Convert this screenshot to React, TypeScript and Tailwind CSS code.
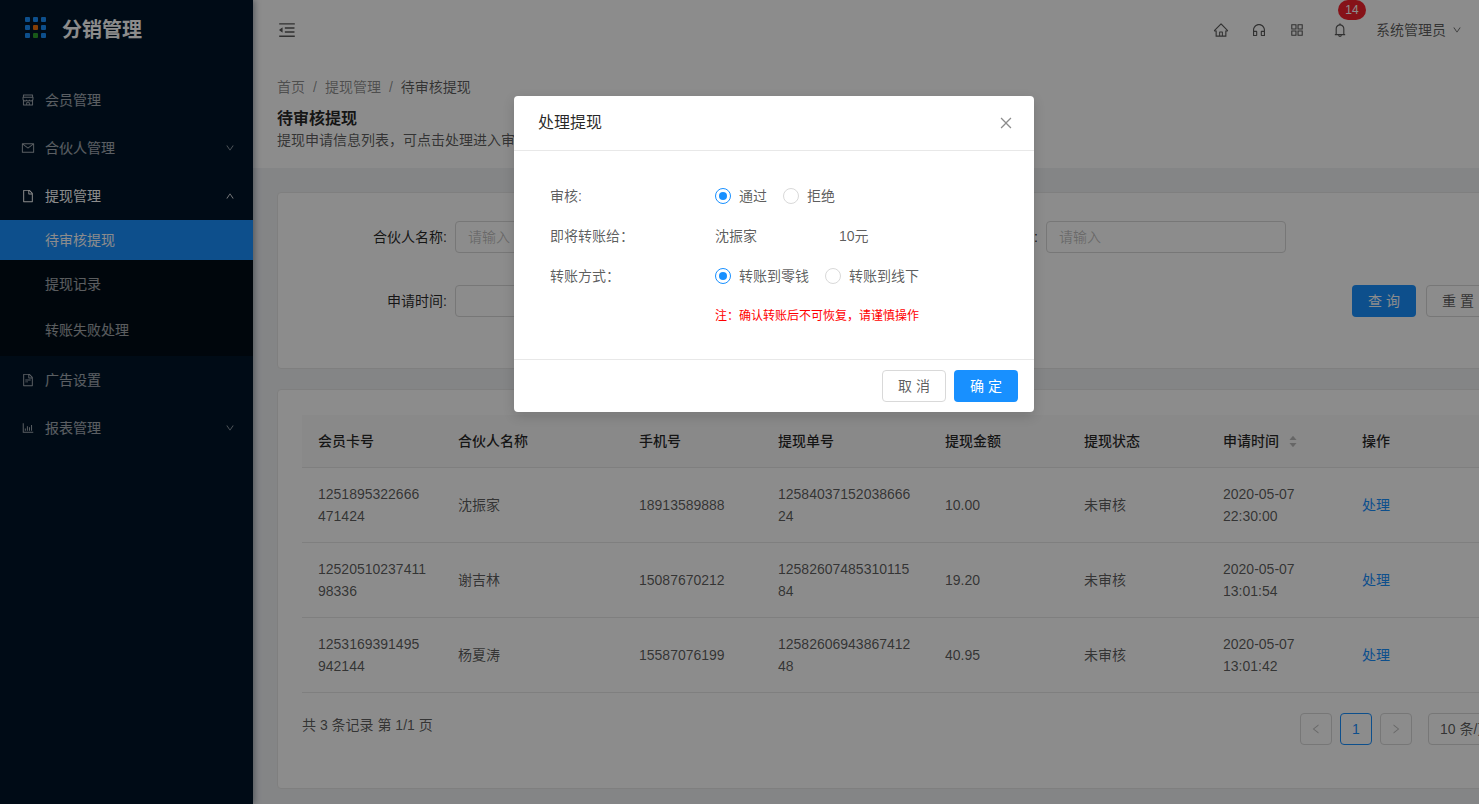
import {
  AiOutlineShop, AiOutlineMail, AiOutlineFile, AiOutlineFileText, AiOutlineBarChart,
  AiOutlineHome, AiOutlineCustomerService, AiOutlineAppstore, AiOutlineBell,
  AiOutlineMenuFold, AiOutlineDown, AiOutlineUp, AiOutlineClose, AiOutlineLeft, AiOutlineRight,
  AiFillCaretUp, AiFillCaretDown,
} from "react-icons/ai";

const FONT = "font-['Liberation_Sans','Noto_Sans_CJK_SC',sans-serif]";

const ROWS = [
  { card: "1251895322666471424", name: "沈振家", phone: "18913589888", no: "1258403715203866624", amount: "10.00", date: "2020-05-07", time: "22:30:00" },
  { card: "1252051023741198336", name: "谢吉林", phone: "15087670212", no: "1258260748531011584", amount: "19.20", date: "2020-05-07", time: "13:01:54" },
  { card: "1253169391495942144", name: "杨夏涛", phone: "15587076199", no: "1258260694386741248", amount: "40.95", date: "2020-05-07", time: "13:01:42" },
];

const COLS = "grid grid-cols-[140px_181px_139px_167px_139px_139px_139px_1fr]";

function Logo() {
  const dots = ["#1890ff", "#1890ff", "#1890ff", "#1890ff", "#f5720a", "#1890ff", "#1890ff", "#2ca02c", "#1890ff"];
  return (
    <div className="grid grid-cols-3 gap-[3px]">
      {dots.map((c, i) => (
        <span key={i} className="h-[5px] w-[5px] rounded-[1px]" style={{ backgroundColor: c }} />
      ))}
    </div>
  );
}

function MenuItem({ icon, label, arrow, open }: { icon: React.ReactNode; label: string; arrow?: "up" | "down"; open?: boolean }) {
  return (
    <div className={`flex h-[48px] items-center pl-[21px] pr-[18px] ${open ? "text-white" : "text-white/65"}`}>
      <span className="mr-[10px] text-[14px]">{icon}</span>
      <span className="flex-1">{label}</span>
      {arrow === "down" && <AiOutlineDown className="text-[10px]" />}
      {arrow === "up" && <AiOutlineUp className="text-[10px]" />}
    </div>
  );
}

function Sidebar() {
  return (
    <aside className="z-10 flex w-[253px] shrink-0 flex-col bg-[#001529] text-[14px] shadow-[2px_0_6px_rgba(0,21,41,0.35)]">
      <div className="flex h-[76px] items-start pl-[25px] pt-[16px]">
        <div className="mt-[1px]"><Logo /></div>
        <span className="ml-[16px] text-[20px] font-bold leading-[28px] text-white">分销管理</span>
      </div>
      <MenuItem icon={<AiOutlineShop />} label="会员管理" />
      <MenuItem icon={<AiOutlineMail />} label="合伙人管理" arrow="down" />
      <MenuItem icon={<AiOutlineFile />} label="提现管理" arrow="up" open />
      <div className="bg-[#000c17]">
        <div className="flex h-[40px] items-center bg-[#1890ff] pl-[45px] text-white">待审核提现</div>
        <div className="flex h-[48px] items-center pl-[45px] text-white/65">提现记录</div>
        <div className="flex h-[48px] items-center pb-[4px] pl-[45px] text-white/65">转账失败处理</div>
      </div>
      <MenuItem icon={<AiOutlineFileText />} label="广告设置" />
      <MenuItem icon={<AiOutlineBarChart />} label="报表管理" arrow="down" />
    </aside>
  );
}

function Topbar() {
  return (
    <header className="flex h-[60px] shrink-0 items-center bg-white pl-[24px] pr-[17px] text-black/65 shadow-[0_1px_4px_rgba(0,21,41,0.08)]">
      <AiOutlineMenuFold className="text-[20px]" />
      <div className="ml-auto flex items-center">
        <AiOutlineHome className="text-[16px]" />
        <AiOutlineCustomerService className="ml-[22px] text-[16px]" />
        <AiOutlineAppstore className="ml-[22px] text-[16px]" />
        <div className="relative ml-[27px]">
          <AiOutlineBell className="text-[16px]" />
          <span className="absolute left-[6px] top-[-22px] flex h-[20px] w-[28px] items-center justify-center rounded-[10px] bg-[#f5222d] text-[12px] text-white">14</span>
        </div>
        <span className="ml-[28px] text-[14px]">系统管理员</span>
        <AiOutlineDown className="ml-[6px] text-[10px]" />
      </div>
    </header>
  );
}

function Field({ placeholder, width }: { placeholder?: string; width: string }) {
  return (
    <div className={`flex h-[32px] items-center rounded border border-[#d9d9d9] bg-white px-[12px] text-[14px] text-black/25 ${width}`}>
      {placeholder}
    </div>
  );
}

function SearchCard() {
  return (
    <section className="mt-[24px] h-[177px] rounded-sm border border-[#e8e8e8] bg-white pt-[28px] text-[14px] text-black/85">
      <div className="grid grid-cols-[177px_240px_351px_240px] items-center">
        <span className="pr-[8px] text-right">合伙人名称:</span>
        <Field placeholder="请输入" width="w-[240px]" />
        <span className="pr-[8px] text-right">手机号:</span>
        <Field placeholder="请输入" width="w-[240px]" />
      </div>
      <div className="mt-[32px] flex items-center">
        <span className="w-[177px] pr-[8px] text-right">申请时间:</span>
        <Field width="w-[240px]" />
        <button className="ml-[657px] h-[32px] w-[64px] rounded bg-[#1890ff] text-white">查 询</button>
        <button className="ml-[10px] h-[32px] w-[64px] rounded border border-[#d9d9d9] bg-white text-black/65">重 置</button>
      </div>
    </section>
  );
}

function TableCard() {
  return (
    <section className="mt-[20px] h-[400px] rounded-sm border border-[#e8e8e8] bg-white px-[24px] pt-[25px] text-[14px] text-black/65">
      <div className={`${COLS} h-[53px] items-center border-b border-[#e8e8e8] bg-[#fafafa] pl-[16px] font-medium text-black/85`}>
        <span>会员卡号</span>
        <span>合伙人名称</span>
        <span>手机号</span>
        <span>提现单号</span>
        <span>提现金额</span>
        <span>提现状态</span>
        <span className="flex items-center">
          申请时间
          <span className="ml-[9px] flex flex-col text-[10px] leading-none text-black/25">
            <AiFillCaretUp className="mb-[-3px]" />
            <AiFillCaretDown />
          </span>
        </span>
        <span>操作</span>
      </div>
      {ROWS.map((r) => (
        <div key={r.card} className={`${COLS} h-[75px] items-center border-b border-[#e8e8e8] pl-[16px] leading-[22px]`}>
          <span className="w-[108px] break-all">{r.card}</span>
          <span>{r.name}</span>
          <span>{r.phone}</span>
          <span className="w-[135px] break-all">{r.no}</span>
          <span>{r.amount}</span>
          <span>未审核</span>
          <span>{r.date}<br />{r.time}</span>
          <span className="text-[#1890ff]">处理</span>
        </div>
      ))}
      <div className="mt-[20px] flex items-start">
        <span className="mt-[1px] leading-[22px]">共 3 条记录 第 1/1 页</span>
        <div className="ml-auto flex items-center">
          <span className="flex h-[32px] w-[32px] items-center justify-center rounded border border-[#d9d9d9] text-[12px] text-black/25"><AiOutlineLeft /></span>
          <span className="ml-[8px] flex h-[32px] w-[32px] items-center justify-center rounded border border-[#1890ff] text-[#1890ff]">1</span>
          <span className="ml-[8px] flex h-[32px] w-[32px] items-center justify-center rounded border border-[#d9d9d9] text-[12px] text-black/25"><AiOutlineRight /></span>
          <span className="ml-[16px] flex h-[32px] w-[100px] items-center rounded border border-[#d9d9d9] pl-[11px]">
            10 条/页<AiOutlineDown className="ml-[1px] text-[12px] text-black/25" />
          </span>
        </div>
      </div>
    </section>
  );
}

function Radio({ label, checked }: { label: string; checked?: boolean }) {
  return (
    <span className="mr-[16px] inline-flex items-center">
      <span className={`flex h-[16px] w-[16px] items-center justify-center rounded-full border bg-white ${checked ? "border-[#1890ff]" : "border-[#d9d9d9]"}`}>
        {checked && <span className="h-[8px] w-[8px] rounded-full bg-[#1890ff]" />}
      </span>
      <span className="ml-[8px]">{label}</span>
    </span>
  );
}

function Modal() {
  return (
    <div className="absolute inset-0 z-20 bg-black/45">
      <div className="ml-[514px] mt-[96px] w-[520px] rounded bg-white text-[14px] text-black/65 shadow-[0_4px_12px_rgba(0,0,0,0.15)]">
        <div className="flex h-[55px] items-center justify-between border-b border-[#e8e8e8] pl-[24px] pr-[20px]">
          <span className="text-[16px] text-black/85">处理提现</span>
          <AiOutlineClose className="text-[16px] text-black/45" />
        </div>
        <div className="h-[208px] pl-[36px] pt-[33px]">
          <div className="flex h-[24px] items-center">
            <span className="w-[165px]">审核:</span>
            <Radio label="通过" checked />
            <Radio label="拒绝" />
          </div>
          <div className="mt-[16px] flex h-[24px] items-center">
            <span className="w-[165px]">即将转账给：</span>
            <span className="w-[124px]">沈振家</span>
            <span>10元</span>
          </div>
          <div className="mt-[16px] flex h-[24px] items-center">
            <span className="w-[165px]">转账方式：</span>
            <Radio label="转账到零钱" checked />
            <Radio label="转账到线下" />
          </div>
          <div className="ml-[165px] mt-[20px] text-[12px] leading-[16px] text-[#ff0000]">注：确认转账后不可恢复，请谨慎操作</div>
        </div>
        <div className="flex h-[53px] items-center justify-end gap-[8px] border-t border-[#e8e8e8] pr-[16px]">
          <button className="h-[32px] w-[64px] rounded border border-[#d9d9d9] bg-white text-black/65">取 消</button>
          <button className="h-[32px] w-[64px] rounded bg-[#1890ff] text-white">确 定</button>
        </div>
      </div>
    </div>
  );
}

export default function App() {
  return (
    <div className={`${FONT} relative flex h-screen w-full overflow-hidden bg-[#f0f2f5]`}>
      <Sidebar />
      <main className="flex min-w-0 flex-1 flex-col">
        <Topbar />
        <div className="min-w-[1300px]">
          <div className="h-[108px] bg-white px-[24px] pt-[16px] text-[14px] text-black/65">
            <div className="flex h-[22px] items-center">
              <span className="text-black/45">首页</span>
              <span className="mx-[8px] text-black/45">/</span>
              <span className="text-black/45">提现管理</span>
              <span className="mx-[8px] text-black/45">/</span>
              <span>待审核提现</span>
            </div>
            <div className="mt-[10px] text-[16px] font-bold leading-[22px] text-black/85">待审核提现</div>
            <div className="leading-[20px]">提现申请信息列表，可点击处理进入审核</div>
          </div>
          <div className="pl-[24px]">
            <SearchCard />
            <TableCard />
          </div>
        </div>
      </main>
      <Modal />
    </div>
  );
}
